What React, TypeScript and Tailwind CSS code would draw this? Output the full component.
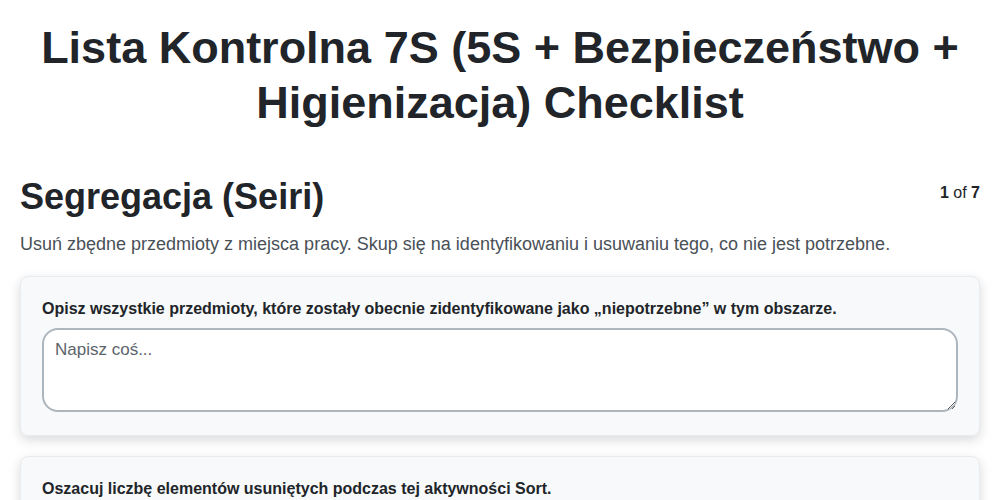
import { useState } from "react";

const questions = [
  "Opisz wszystkie przedmioty, które zostały obecnie zidentyfikowane jako „niepotrzebne” w tym obszarze.",
  "Oszacuj liczbę elementów usuniętych podczas tej aktywności Sort.",
];

export default function App() {
  const [answers, setAnswers] = useState<string[]>(questions.map(() => ""));

  return (
    <div className="min-h-screen bg-white px-5 text-[#212529] font-['Liberation_Sans',Arial,sans-serif]">
      <h1 className="pt-5 text-center text-[45px] font-bold leading-[55px]">
        Lista Kontrolna 7S (5S + Bezpieczeństwo + Higienizacja) Checklist
      </h1>

      <div className="mt-[45px] flex items-start justify-between">
        <h2 className="text-[36px] font-bold leading-[43px]">Segregacja (Seiri)</h2>
        <span className="pt-[6px] text-base">
          <b>1</b> of <b>7</b>
        </span>
      </div>
      <p className="mt-[12px] text-lg text-[#495057]">
        Usuń zbędne przedmioty z miejsca pracy. Skup się na identyfikowaniu i usuwaniu tego, co nie jest potrzebne.
      </p>

      {/* Question cards */}
      <div className="mt-[18px] flex flex-col gap-5">
        {questions.map((q, i) => (
          <div
            key={i}
            className="rounded-lg border border-[#e9ecef] bg-[#f8f9fa] px-[21px] pb-[23px] pt-5 shadow-[0_4px_12px_rgba(0,0,0,0.15)]"
          >
            <label className="block text-base font-bold leading-6">{q}</label>
            <textarea
              value={answers[i]}
              onChange={(e) => {
                const next = [...answers];
                next[i] = e.target.value;
                setAnswers(next);
              }}
              placeholder="Napisz coś..."
              className="mt-[7px] block h-[84px] w-full rounded-2xl border-2 border-[#adb5bd] bg-white px-[11px] py-[7px] text-[17px] text-[#212529] placeholder:text-[#5c636a] focus:outline-none"
            />
          </div>
        ))}
      </div>
    </div>
  );
}
